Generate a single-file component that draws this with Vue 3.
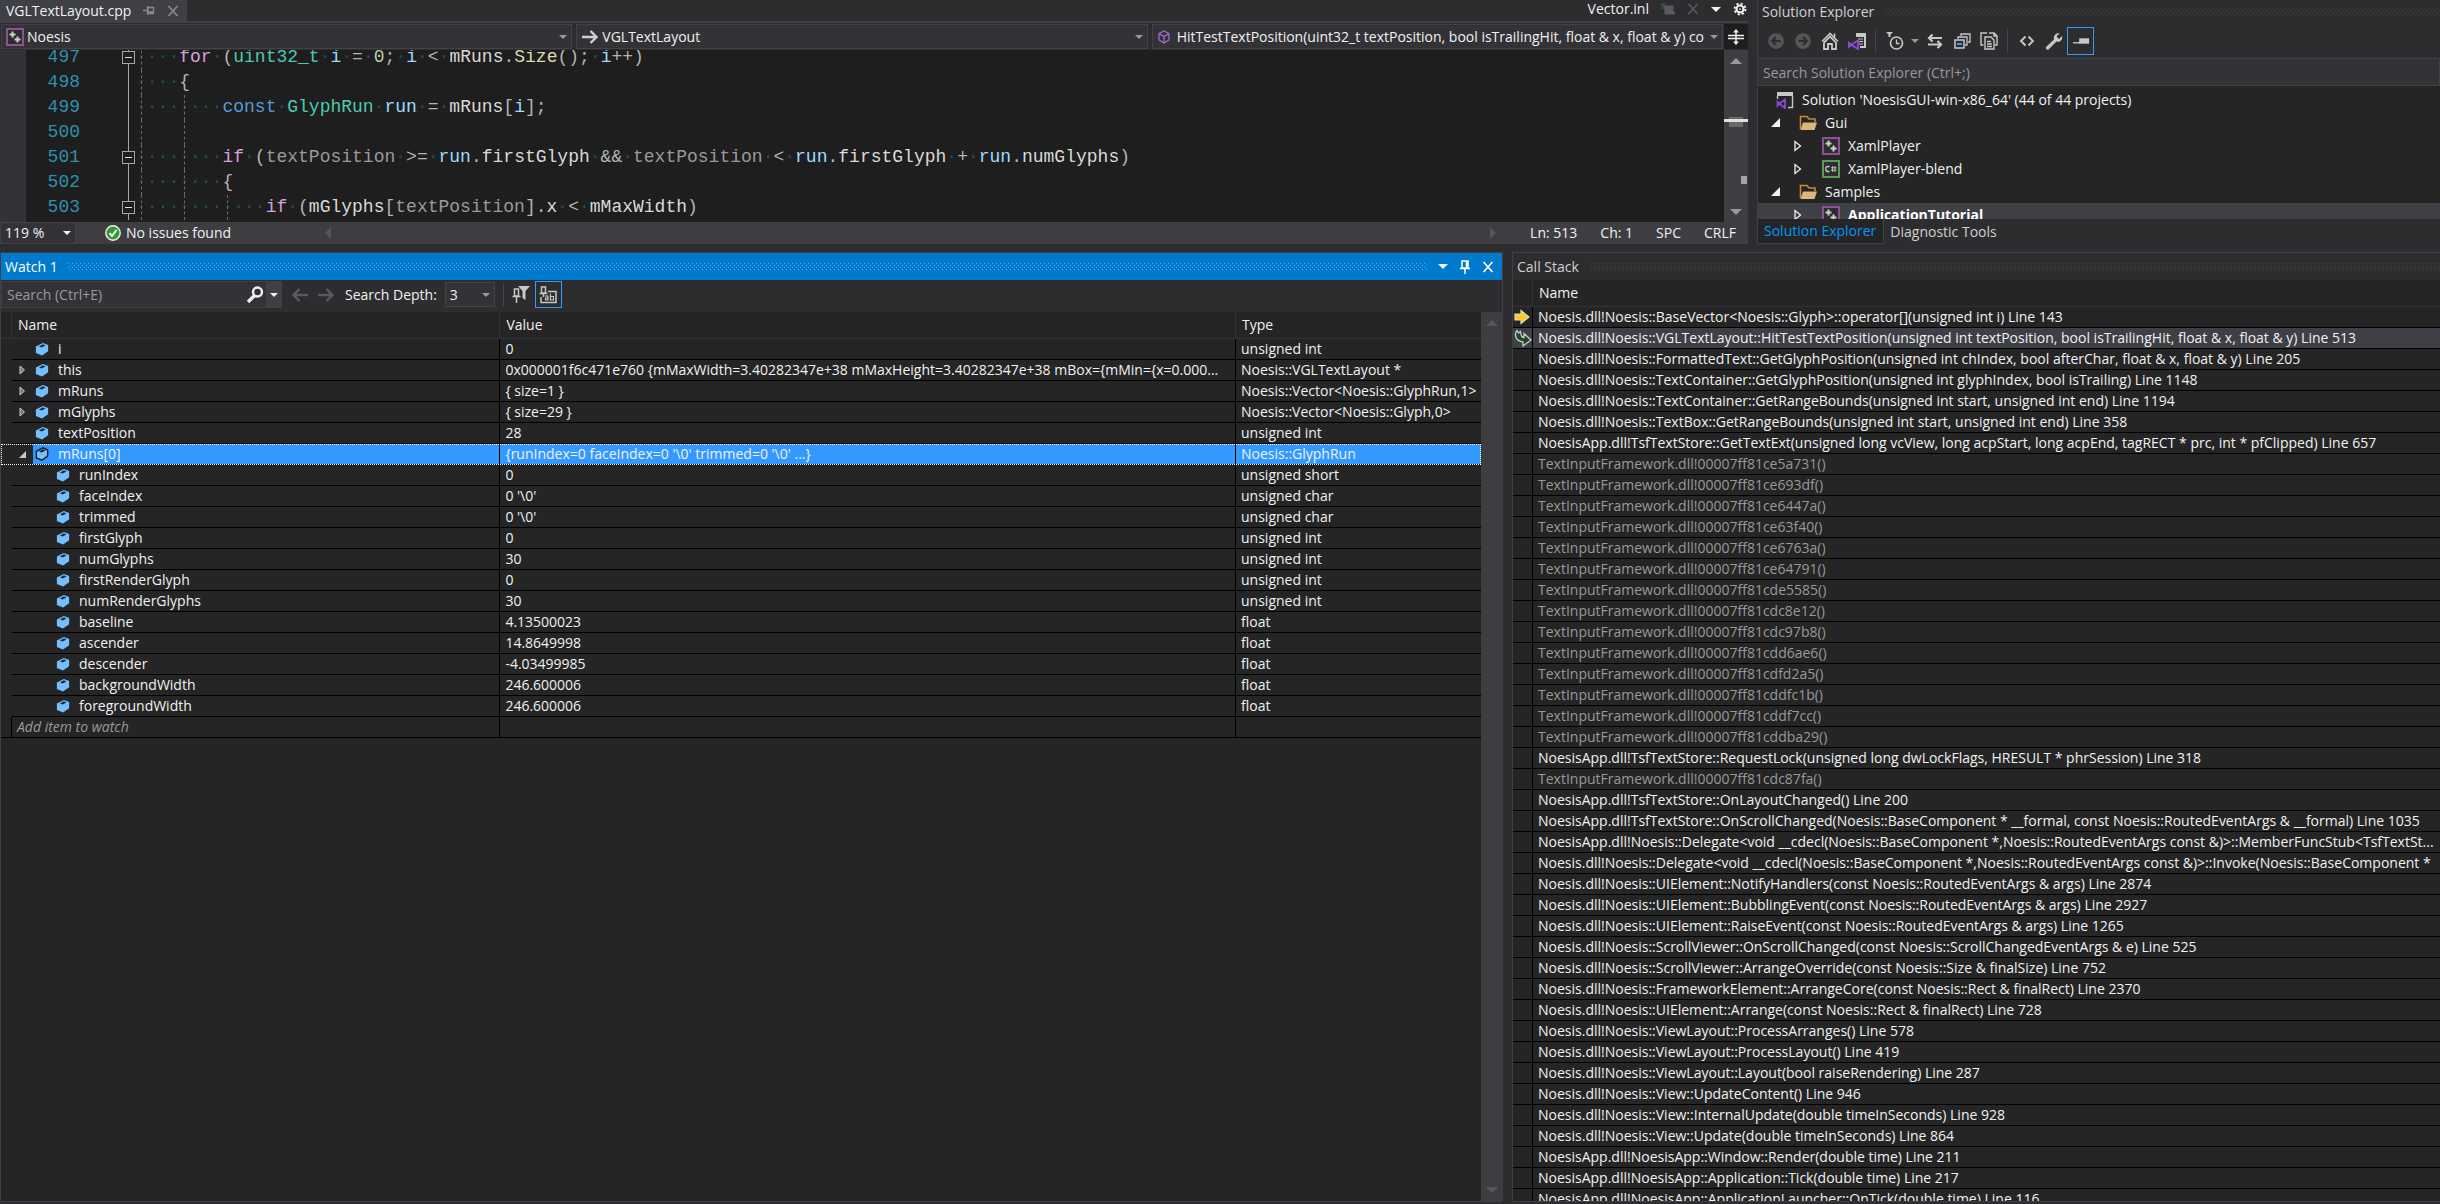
<template>
  <div class="ide">
    <svg class="sprite" aria-hidden="true">
      <symbol id="i-cube" viewBox="0 0 16 16">
        <path d="M1 5 L9 1 L15 3.5 V10.5 L8 15.5 L1 12.5z" fill="#75bfff" />
        <path d="M4.5 5 L9 2.6 L12 3.9 L7.6 6.4z" fill="#1b2c3a" />
      </symbol>
      <symbol id="i-cube-sel" viewBox="0 0 16 16">
        <path d="M1.5 5 L9 1 L14.5 3.5 V10.5 L8 15 L1.5 12.5z" fill="#75bfff" stroke="#14222e" stroke-width="1.6" />
        <path d="M4.5 5 L9 2.6 L12 3.9 L7.6 6.4z" fill="#14222e" />
      </symbol>
      <symbol id="i-cpp" viewBox="0 0 18 18">
        <rect x="1" y="1" width="16" height="16" fill="#2d2d30" stroke="#8d5292" stroke-width="2" />
        <path d="M6.5 3.5v6M3.5 6.5h6M11.5 8.5v6M8.5 11.5h6" stroke="#d0d0d0" stroke-width="2" />
      </symbol>
      <symbol id="i-cs" viewBox="0 0 18 18">
        <rect x="1" y="1" width="16" height="16" fill="#2d2d30" stroke="#5d9c5d" stroke-width="2" />
        <path d="M7.500 6.500H5L3.800 7.700v2.600L5 11.500h2.500" fill="none" stroke="#c8c8c8" stroke-width="1.300" />
        <path d="M10.500 6v6M13 6v6M9 7.800h5.500M9 10.200h5.500" fill="none" stroke="#b8b8b8" stroke-width="1" />
      </symbol>
      <symbol id="i-folder" viewBox="0 0 18 18">
        <path d="M1.500 15V2.500H8l2 2.500h6v3" fill="none" stroke="#c6893a" stroke-width="1.6" />
        <path d="M4 8.500h14l-2.500 7.500H1.500z" fill="#dcb67a" />
      </symbol>
      <symbol id="i-sln" viewBox="0 0 18 18">
        <path d="M1 1h16v4H1z" fill="#c8c8c8" />
        <path d="M1.500 5v3M16.500 5v11.500H12" fill="none" stroke="#c8c8c8" stroke-width="1.4" />
        <path d="M9 8.500v8.500L3.500 13 1.500 14.700V10.800L3.500 12.500z" fill="none" stroke="#8649d0" stroke-width="1.800" />
      </symbol>
      <symbol id="i-back" viewBox="0 0 16 16">
        <circle cx="8" cy="8" r="7" fill="#555558" />
        <path d="M12 8H5M8 4.500 4.500 8 8 11.500" fill="none" stroke="#2d2d30" stroke-width="1.800" />
      </symbol>
      <symbol id="i-fwd" viewBox="0 0 16 16">
        <circle cx="8" cy="8" r="7" fill="#555558" />
        <path d="M4 8h7M8 4.500 11.500 8 8 11.500" fill="none" stroke="#2d2d30" stroke-width="1.800" />
      </symbol>
      <symbol id="i-home" viewBox="0 0 18 18">
        <path d="M1 9.500 9 1.500l8 8M13.500 1.500v4" fill="none" stroke="#c8c8c8" stroke-width="1.600" />
        <path d="M3 10.500 9 4.500l6 6V17h-4v-5H7v5H3z" fill="none" stroke="#c8c8c8" stroke-width="1.800" />
      </symbol>
      <symbol id="i-views" viewBox="0 0 18 18">
        <path d="M8 1h10v15h-6v-2h4V5H8z" fill="#c8c8c8" />
        <path d="M10 7h5M10 9.500h5M11 12h4" stroke="#c8c8c8" stroke-width="1.200" />
        <path d="M10 8.500v8.500L3.500 13 1 14.700V10.800L3.500 12.500z" fill="none" stroke="#8649d0" stroke-width="1.900" />
      </symbol>
      <symbol id="i-pending" viewBox="0 0 18 18">
        <path d="M0 0h7L4.500 2.500V5H2.500V2.500z" fill="#c8c8c8" />
        <circle cx="10.500" cy="11" r="6" fill="none" stroke="#c8c8c8" stroke-width="1.600" />
        <path d="M10.500 7.500V11.500h3" fill="none" stroke="#c8c8c8" stroke-width="1.300" />
      </symbol>
      <symbol id="i-sync" viewBox="0 0 18 18">
        <path d="M3 6h13M6.500 2.500 3 6l3.500 3.500M2 12.500h13M11.500 9l3.500 3.500-3.500 3.500" fill="none" stroke="#c8c8c8" stroke-width="2.200" />
      </symbol>
      <symbol id="i-collapse" viewBox="0 0 18 18">
        <rect x="2" y="8" width="9" height="8" fill="none" stroke="#c8c8c8" stroke-width="1.500" />
        <path d="M5 7V5h9v8h-2M8 4V2h9v8h-2" fill="none" stroke="#c8c8c8" stroke-width="1.300" />
        <path d="M4 12h5" stroke="#3399ff" stroke-width="2" />
      </symbol>
      <symbol id="i-files" viewBox="0 0 18 18">
        <path d="M3.500 13H1V1h6M9 1h5l3 3v9h-2M14 1v3h3" fill="none" stroke="#c8c8c8" stroke-width="1.400" />
        <path d="M5 5h6l3 3v9H5zM7 9.500h4M7 12h5M7 14.500h5" fill="none" stroke="#c8c8c8" stroke-width="1.400" />
      </symbol>
      <symbol id="i-code" viewBox="0 0 16 16">
        <path d="M6.500 3.500 2 8l4.500 4.500M9.500 3.500 14 8l-4.500 4.500" fill="none" stroke="#c8c8c8" stroke-width="1.900" />
      </symbol>
      <symbol id="i-wrench" viewBox="0 0 18 18">
        <path d="M1 15 9 7.500C8 4 11 .5 14.500 1.500L11.500 4.500l2.500 2.500 3-3c1 4-2 6.500-5.500 5.500L3.500 17.500c-1.500 1-3.500-1-2.500-2.500z" fill="#c8c8c8" />
      </symbol>
      <symbol id="i-preview" viewBox="0 0 20 16">
        <path d="M1 10h8" stroke="#c8c8c8" stroke-width="1.500" />
        <path d="M8 5h11v6H8z" fill="#c8c8c8" />
      </symbol>
      <symbol id="i-gear" viewBox="0 0 16 16">
        <circle cx="8" cy="8" r="4" fill="none" stroke="#f1f1f1" stroke-width="2.400" />
        <circle cx="8" cy="8" r="6.200" fill="none" stroke="#f1f1f1" stroke-width="2.200" stroke-dasharray="2.430 2.430" />
        <circle cx="8" cy="8" r="1" fill="#f1f1f1" />
      </symbol>
      <symbol id="i-close" viewBox="0 0 12 12">
        <path d="M1.500 1 10.500 11M10.500 1 1.500 11" stroke="currentColor" stroke-width="1.700" />
      </symbol>
      <symbol id="i-pin" viewBox="0 0 12 14">
        <path d="M3 1h6v7H3zM7.500 1v7M1 8.500h10M6 9v5" fill="none" stroke="currentColor" stroke-width="1.500" />
      </symbol>
      <symbol id="i-pin-side" viewBox="0 0 12 12">
        <path d="M5 2.500h5.500v6H5zM5 7h5.500M4.500 1v9M4.500 5.500H0" fill="none" stroke="currentColor" stroke-width="1.300" />
      </symbol>
      <symbol id="i-keep" viewBox="0 0 14 12">
        <path d="M4 3h8v6h2v2H4zM0 1l4 3M3 0v4M0 5h4" fill="currentColor" stroke="currentColor" />
      </symbol>
      <symbol id="i-arrow" viewBox="0 0 18 16">
        <path d="M1 8h14M9.500 2 15.500 8l-6 6" fill="none" stroke="currentColor" stroke-width="2.400" />
      </symbol>
      <symbol id="i-method" viewBox="0 0 12 14">
        <path d="M6 1 11 3.500v6.500L6 13 1 10V3.500zM1 3.500 6 6.500 11 3.500M6 6.500V13" fill="none" stroke="#a56dd6" stroke-width="1.200" />
      </symbol>
      <symbol id="i-split" viewBox="0 0 16 16">
        <path d="M0 6.500h16M0 9.500h16M8 1v14" stroke="#f1f1f1" stroke-width="1.500" />
        <path d="M8 0 11 3.500H5zM8 16l3-3.500H5z" fill="#f1f1f1" />
      </symbol>
      <symbol id="i-check" viewBox="0 0 16 16">
        <circle cx="8" cy="8" r="7.200" fill="#339933" stroke="#f1f1f1" stroke-width="1.400" />
        <path d="M4.500 8.200 7 11l4.500-6" fill="none" stroke="#fff" stroke-width="1.900" />
      </symbol>
      <symbol id="i-search" viewBox="0 0 18 18">
        <circle cx="11.500" cy="6" r="4.500" fill="none" stroke="#f1f1f1" stroke-width="2.400" />
        <path d="M8.500 9.500 2 16" stroke="#f1f1f1" stroke-width="3.400" />
      </symbol>
      <symbol id="i-pinfilter" viewBox="0 0 18 18">
        <path d="M2.500 3h4v7h-4zM0.500 10.500h8M4.500 11v6" fill="none" stroke="#c8c8c8" stroke-width="1.500" />
        <path d="M6 0h12l-4.500 5v9L10.500 12V5z" fill="#c8c8c8" />
      </symbol>
      <symbol id="i-pinab" viewBox="0 0 18 18">
        <path d="M2.500 1h4v6h-4zM0.500 7.500h8M4.500 8v3M9 5.500h8v11H2V11" fill="none" stroke="#c8c8c8" stroke-width="1.500" />
        <path d="M6 10h3v4H6.500v-2H9M11.500 7.500V14H14.500v-3.500h-3" fill="none" stroke="#c8c8c8" stroke-width="1.200" />
      </symbol>
      <symbol id="i-current" viewBox="0 0 16 16">
        <path d="M1 5h6V1.500L15 8l-8 6.500V11H1z" fill="#ffcc22" stroke="#d8d8d8" stroke-width="1.200" />
      </symbol>
      <symbol id="i-caller" viewBox="0 0 18 18">
        <path d="M3 1.500C.5 4.500.5 12 9 13v4l8-6-7-6.500V8.500C6.500 8.500 7 5 6.500 2.500L4.500 4z" fill="#1f4a2a" stroke="#c8c8c8" stroke-width="1.300" />
      </symbol>
    </svg>

    <div class="top-row">
      <section class="editor">
        <div class="tab-strip">
          <div class="file-tab">
            <span>VGLTextLayout.cpp</span>
            <button class="plain dim" aria-label="Pin tab"><svg class="s12"><use href="#i-pin-side" /></svg></button>
            <button class="plain dim" aria-label="Close tab"><svg class="s12"><use href="#i-close" /></svg></button>
          </div>
          <div class="preview-tab">
            <span>Vector.inl</span>
            <button class="plain faint" aria-label="Keep open"><svg class="s14"><use href="#i-keep" /></svg></button>
            <button class="plain faint" aria-label="Close preview"><svg class="s12"><use href="#i-close" /></svg></button>
            <button class="plain" aria-label="Open files"><i class="caret big"></i></button>
            <button class="plain" aria-label="Options"><svg class="s14"><use href="#i-gear" /></svg></button>
          </div>
        </div>

        <div class="nav-bar">
          <div class="combo">
            <svg class="s18"><use href="#i-cpp" /></svg>
            <select aria-label="Project"><option>Noesis</option></select>
            <i class="caret"></i>
          </div>
          <div class="combo">
            <svg class="s18 light"><use href="#i-arrow" /></svg>
            <select aria-label="Scope"><option>VGLTextLayout</option></select>
            <i class="caret"></i>
          </div>
          <div class="combo member">
            <svg class="s14"><use href="#i-method" /></svg>
            <select aria-label="Member"><option>HitTestTextPosition(uint32_t textPosition, bool isTrailingHit, float &amp; x, float &amp; y) const</option></select>
            <i class="caret"></i>
          </div>
          <button class="split" aria-label="Split"><svg class="s16"><use href="#i-split" /></svg></button>
        </div>

        <div class="code-area">
          <div class="code">
            <div v-for="line in codeLines" :key="line.no" class="code-line">
              <span class="glyph-margin"></span>
              <span class="line-no">{{ line.no }}</span>
              <span class="fold"><b v-if="line.fold"></b></span>
              <code class="src"><i v-for="g in line.guides" :key="g" class="guide" :class="'g' + g"></i><span
                v-for="(t, i) in line.tokens" :key="i" :class="t[1]">{{ t[0] }}</span></code>
            </div>
          </div>
          <div class="map">
            <i class="tri up"></i>
            <i class="mark view"></i>
            <i class="mark caret-line"></i>
            <i class="mark change"></i>
            <i class="tri down"></i>
          </div>
        </div>

        <div class="status">
          <div class="combo zoom">
            <select aria-label="Zoom"><option>119 %</option></select>
            <i class="caret white"></i>
          </div>
          <span class="issues"><svg class="s16"><use href="#i-check" /></svg>No issues found</span>
          <i class="tri left"></i>
          <span class="grow"></span>
          <i class="tri right"></i>
          <span class="pos">Ln: 513</span>
          <span class="pos">Ch: 1</span>
          <span class="pos">SPC</span>
          <span class="pos">CRLF</span>
        </div>
      </section>

      <section class="solution">
        <div class="panel-title"><span>Solution Explorer</span><i class="grip"></i></div>
        <div class="sln-tools">
          <template v-for="tool in slnTools" :key="tool.label">
            <span v-if="tool.sep" class="sep"></span>
            <button class="tool" :class="{ on: tool.on }" :aria-label="tool.label">
              <svg :class="tool.size || 's18'"><use :href="'#i-' + tool.icon" /></svg>
            </button>
            <button v-if="tool.menu" class="plain tool-menu" aria-label="Filter menu"><i class="caret"></i></button>
          </template>
        </div>
        <input class="sln-search" type="text" placeholder="Search Solution Explorer (Ctrl+;)" aria-label="Search Solution Explorer" />
        <div class="tree">
          <div v-for="node in tree" :key="node.name" class="node" :class="['lvl' + node.level, { selected: node.selected }]">
            <span v-if="node.level" class="slot">
              <svg v-if="node.open" width="9" height="9"><path d="M9 0v9H0z" fill="#f1f1f1" /></svg>
              <svg v-else width="8" height="12"><path d="M1 1.500v9L6.500 6z" fill="none" stroke="#f1f1f1" stroke-width="1.300" /></svg>
            </span>
            <svg class="s18"><use :href="'#i-' + node.icon" /></svg>
            <span class="label">{{ node.name }}</span>
          </div>
        </div>
        <div class="dock-tabs">
          <button class="dock-tab active">Solution Explorer</button>
          <button class="dock-tab">Diagnostic Tools</button>
        </div>
      </section>
    </div>

    <div class="bottom-row">
      <section class="watch">
        <div class="panel-title blue">
          <span>Watch 1</span><i class="grip"></i>
          <button class="plain" aria-label="Window position"><i class="caret big"></i></button>
          <button class="plain" aria-label="Auto hide"><svg class="s14"><use href="#i-pin" /></svg></button>
          <button class="plain" aria-label="Close"><svg class="s12"><use href="#i-close" /></svg></button>
        </div>
        <div class="watch-tools">
          <div class="search-box">
            <input type="text" placeholder="Search (Ctrl+E)" aria-label="Search watch" />
            <button class="plain" aria-label="Find"><svg class="s18"><use href="#i-search" /></svg></button>
            <button class="plain drop" aria-label="Search options"><i class="caret white"></i></button>
          </div>
          <button class="plain prev faint" aria-label="Previous"><svg class="s18"><use href="#i-arrow" /></svg></button>
          <button class="plain faint" aria-label="Next"><svg class="s18"><use href="#i-arrow" /></svg></button>
          <label for="depth">Search Depth:</label>
          <div class="combo depth">
            <select id="depth"><option>3</option></select>
            <i class="caret"></i>
          </div>
          <span class="sep"></span>
          <button class="tool" aria-label="Pinned filter"><svg class="s18"><use href="#i-pinfilter" /></svg></button>
          <button class="tool on" aria-label="Pinned names"><svg class="s18"><use href="#i-pinab" /></svg></button>
        </div>
        <div class="watch-body">
          <table class="grid">
            <colgroup><col class="c-margin" /><col class="c-name" /><col /><col class="c-type" /></colgroup>
            <thead>
              <tr><th></th><th>Name</th><th>Value</th><th>Type</th></tr>
            </thead>
            <tbody>
              <tr v-for="row in watches" :key="row.name" :class="{ selected: row.selected }">
                <td class="margin"></td>
                <td class="name">
                  <div class="cell">
                    <span class="exp" :class="{ child: row.child }">
                      <svg v-if="row.expand === 'closed'" width="7" height="10"><path d="M1 1v8L5.500 5z" fill="#777" stroke="#c8c8c8" /></svg>
                      <svg v-if="row.expand === 'open'" width="7" height="7"><path d="M7 0v7H0z" fill="#c8c8c8" /></svg>
                    </span>
                    <span class="label"><svg class="s14"><use :href="row.selected ? '#i-cube-sel' : '#i-cube'" /></svg>{{ row.name }}</span>
                  </div>
                </td>
                <td>{{ row.value }}</td>
                <td>{{ row.type }}</td>
              </tr>
              <tr class="add">
                <td class="margin"></td>
                <td>Add item to watch</td>
                <td></td>
                <td></td>
              </tr>
            </tbody>
          </table>
          <div class="vscroll"><i class="tri up off"></i><i class="tri down off"></i></div>
        </div>
      </section>

      <section class="stack">
        <div class="panel-title"><span>Call Stack</span><i class="grip"></i></div>
        <table class="grid">
          <colgroup><col class="c-gutter" /><col /></colgroup>
          <thead>
            <tr><th></th><th>Name</th></tr>
          </thead>
          <tbody>
            <tr v-for="(frame, i) in frames" :key="i" :class="{ external: frame.startsWith('TextInput'), current: i === 1 }">
              <td class="icon-cell">
                <svg v-if="i === 0" class="s16"><use href="#i-current" /></svg>
                <svg v-if="i === 1" class="s18"><use href="#i-caller" /></svg>
              </td>
              <td>{{ frame }}</td>
            </tr>
          </tbody>
        </table>
      </section>
    </div>
  </div>
</template>

<script setup>
import { ref } from 'vue'

// every space in the source is drawn as a dot
const line = (no, fold, guides, indent, parts) => {
  const tokens = [['·'.repeat(indent), 'ws']]
  parts.forEach(([text, cls]) => {
    text.split(/( )/).filter(Boolean).forEach((t) => {
      tokens.push(t === ' ' ? ['·', 'ws'] : [t, cls])
    })
  })
  return { no, fold, guides, tokens }
}

const codeLines = [
  line(497, true, [0], 4, [['for', 'ctl'], [' (', 'op'], ['uint32_t', 'type'], [' i', 'var'], [' = ', 'op'], ['0', 'num'], ['; ', 'op'], ['i', 'var'], [' < ', 'op'], ['mRuns', 'mem'], ['.', 'op'], ['Size', 'fn'], ['(); ', 'op'], ['i', 'var'], ['++)', 'op']]),
  line(498, false, [0], 4, [['{', 'op']]),
  line(499, false, [0, 4], 8, [['const', 'kw'], [' GlyphRun', 'type'], [' run', 'var'], [' = ', 'op'], ['mRuns', 'mem'], ['[', 'op'], ['i', 'var'], ['];', 'op']]),
  line(500, false, [0, 4], 0, []),
  line(501, true, [0, 4], 8, [['if', 'ctl'], [' (', 'op'], ['textPosition', 'par'], [' >= ', 'op'], ['run', 'var'], ['.', 'op'], ['firstGlyph', 'mem'], [' && ', 'op'], ['textPosition', 'par'], [' < ', 'op'], ['run', 'var'], ['.', 'op'], ['firstGlyph', 'mem'], [' + ', 'op'], ['run', 'var'], ['.', 'op'], ['numGlyphs', 'mem'], [')', 'op']]),
  line(502, false, [0, 4], 8, [['{', 'op']]),
  line(503, true, [0, 4, 8], 12, [['if', 'ctl'], [' (', 'op'], ['mGlyphs', 'mem'], ['[', 'op'], ['textPosition', 'par'], ['].', 'op'], ['x', 'mem'], [' < ', 'op'], ['mMaxWidth', 'mem'], [')', 'op']])
]

const slnTools = [
  { icon: 'back', label: 'Back' },
  { icon: 'fwd', label: 'Forward' },
  { icon: 'home', label: 'Home' },
  { icon: 'views', label: 'Switch Views' },
  { icon: 'pending', label: 'Pending Changes Filter', sep: true, menu: true },
  { icon: 'sync', label: 'Sync' },
  { icon: 'collapse', label: 'Collapse All' },
  { icon: 'files', label: 'Show All Files' },
  { icon: 'code', label: 'View Code', sep: true, size: 's16' },
  { icon: 'wrench', label: 'Properties' },
  { icon: 'preview', label: 'Preview Selected Items', on: true }
]

const tree = ref([
  { name: "Solution 'NoesisGUI-win-x86_64' (44 of 44 projects)", level: 0, icon: 'sln' },
  { name: 'Gui', level: 1, icon: 'folder', open: true },
  { name: 'XamlPlayer', level: 2, icon: 'cpp' },
  { name: 'XamlPlayer-blend', level: 2, icon: 'cs' },
  { name: 'Samples', level: 1, icon: 'folder', open: true },
  { name: 'ApplicationTutorial', level: 2, icon: 'cpp', selected: true }
])

const watches = ref([
  { name: 'i', value: '0', type: 'unsigned int' },
  { name: 'this', value: '0x000001f6c471e760 {mMaxWidth=3.40282347e+38 mMaxHeight=3.40282347e+38 mBox={mMin={x=0.000...', type: 'Noesis::VGLTextLayout *', expand: 'closed' },
  { name: 'mRuns', value: '{ size=1 }', type: 'Noesis::Vector<Noesis::GlyphRun,1>', expand: 'closed' },
  { name: 'mGlyphs', value: '{ size=29 }', type: 'Noesis::Vector<Noesis::Glyph,0>', expand: 'closed' },
  { name: 'textPosition', value: '28', type: 'unsigned int' },
  { name: 'mRuns[0]', value: "{runIndex=0 faceIndex=0 '\\0' trimmed=0 '\\0' ...}", type: 'Noesis::GlyphRun', expand: 'open', selected: true },
  { name: 'runIndex', value: '0', type: 'unsigned short', child: true },
  { name: 'faceIndex', value: "0 '\\0'", type: 'unsigned char', child: true },
  { name: 'trimmed', value: "0 '\\0'", type: 'unsigned char', child: true },
  { name: 'firstGlyph', value: '0', type: 'unsigned int', child: true },
  { name: 'numGlyphs', value: '30', type: 'unsigned int', child: true },
  { name: 'firstRenderGlyph', value: '0', type: 'unsigned int', child: true },
  { name: 'numRenderGlyphs', value: '30', type: 'unsigned int', child: true },
  { name: 'baseline', value: '4.13500023', type: 'float', child: true },
  { name: 'ascender', value: '14.8649998', type: 'float', child: true },
  { name: 'descender', value: '-4.03499985', type: 'float', child: true },
  { name: 'backgroundWidth', value: '246.600006', type: 'float', child: true },
  { name: 'foregroundWidth', value: '246.600006', type: 'float', child: true }
])

const frames = ref([
  'Noesis.dll!Noesis::BaseVector<Noesis::Glyph>::operator[](unsigned int i) Line 143',
  'Noesis.dll!Noesis::VGLTextLayout::HitTestTextPosition(unsigned int textPosition, bool isTrailingHit, float & x, float & y) Line 513',
  'Noesis.dll!Noesis::FormattedText::GetGlyphPosition(unsigned int chIndex, bool afterChar, float & x, float & y) Line 205',
  'Noesis.dll!Noesis::TextContainer::GetGlyphPosition(unsigned int glyphIndex, bool isTrailing) Line 1148',
  'Noesis.dll!Noesis::TextContainer::GetRangeBounds(unsigned int start, unsigned int end) Line 1194',
  'Noesis.dll!Noesis::TextBox::GetRangeBounds(unsigned int start, unsigned int end) Line 358',
  'NoesisApp.dll!TsfTextStore::GetTextExt(unsigned long vcView, long acpStart, long acpEnd, tagRECT * prc, int * pfClipped) Line 657',
  'TextInputFramework.dll!00007ff81ce5a731()',
  'TextInputFramework.dll!00007ff81ce693df()',
  'TextInputFramework.dll!00007ff81ce6447a()',
  'TextInputFramework.dll!00007ff81ce63f40()',
  'TextInputFramework.dll!00007ff81ce6763a()',
  'TextInputFramework.dll!00007ff81ce64791()',
  'TextInputFramework.dll!00007ff81cde5585()',
  'TextInputFramework.dll!00007ff81cdc8e12()',
  'TextInputFramework.dll!00007ff81cdc97b8()',
  'TextInputFramework.dll!00007ff81cdd6ae6()',
  'TextInputFramework.dll!00007ff81cdfd2a5()',
  'TextInputFramework.dll!00007ff81cddfc1b()',
  'TextInputFramework.dll!00007ff81cddf7cc()',
  'TextInputFramework.dll!00007ff81cddba29()',
  'NoesisApp.dll!TsfTextStore::RequestLock(unsigned long dwLockFlags, HRESULT * phrSession) Line 318',
  'TextInputFramework.dll!00007ff81cdc87fa()',
  'NoesisApp.dll!TsfTextStore::OnLayoutChanged() Line 200',
  'NoesisApp.dll!TsfTextStore::OnScrollChanged(Noesis::BaseComponent * __formal, const Noesis::RoutedEventArgs & __formal) Line 1035',
  'NoesisApp.dll!Noesis::Delegate<void __cdecl(Noesis::BaseComponent *,Noesis::RoutedEventArgs const &)>::MemberFuncStub<TsfTextSt...',
  'Noesis.dll!Noesis::Delegate<void __cdecl(Noesis::BaseComponent *,Noesis::RoutedEventArgs const &)>::Invoke(Noesis::BaseComponent *',
  'Noesis.dll!Noesis::UIElement::NotifyHandlers(const Noesis::RoutedEventArgs & args) Line 2874',
  'Noesis.dll!Noesis::UIElement::BubblingEvent(const Noesis::RoutedEventArgs & args) Line 2927',
  'Noesis.dll!Noesis::UIElement::RaiseEvent(const Noesis::RoutedEventArgs & args) Line 1265',
  'Noesis.dll!Noesis::ScrollViewer::OnScrollChanged(const Noesis::ScrollChangedEventArgs & e) Line 525',
  'Noesis.dll!Noesis::ScrollViewer::ArrangeOverride(const Noesis::Size & finalSize) Line 752',
  'Noesis.dll!Noesis::FrameworkElement::ArrangeCore(const Noesis::Rect & finalRect) Line 2370',
  'Noesis.dll!Noesis::UIElement::Arrange(const Noesis::Rect & finalRect) Line 728',
  'Noesis.dll!Noesis::ViewLayout::ProcessArranges() Line 578',
  'Noesis.dll!Noesis::ViewLayout::ProcessLayout() Line 419',
  'Noesis.dll!Noesis::ViewLayout::Layout(bool raiseRendering) Line 287',
  'Noesis.dll!Noesis::View::UpdateContent() Line 946',
  'Noesis.dll!Noesis::View::InternalUpdate(double timeInSeconds) Line 928',
  'Noesis.dll!Noesis::View::Update(double timeInSeconds) Line 864',
  'NoesisApp.dll!NoesisApp::Window::Render(double time) Line 211',
  'NoesisApp.dll!NoesisApp::Application::Tick(double time) Line 217',
  'NoesisApp.dll!NoesisApp::ApplicationLauncher::OnTick(double time) Line 116'
])
</script>

<style>
body {
  background: #2d2d30;
}
</style>

<style scoped>
.ide {
  display: flex;
  flex-direction: column;
  gap: 8px;
  height: 100vh;
  overflow: hidden;
  background: #2d2d30;
  color: #f1f1f1;
  font-family: "Open Sans", "Noto Sans", sans-serif;
  font-size: 14px;
  line-height: 20px;
}

.ide *,
.ide *::before {
  box-sizing: border-box;
}

.sprite {
  position: absolute;
  width: 0;
  height: 0;
}

svg {
  display: block;
  flex: none;
}

.s12 { width: 12px; height: 12px; }
.s14 { width: 14px; height: 14px; }
.s16 { width: 16px; height: 16px; }
.s18 { width: 18px; height: 18px; }

button,
input,
select {
  font: inherit;
  color: inherit;
  margin: 0;
  padding: 0;
  border: 0;
  border-radius: 0;
  outline: none;
  background: none;
}

input::placeholder {
  color: #999;
  opacity: 1;
}

.plain {
  display: flex;
  align-items: center;
  justify-content: center;
}

.dim { color: #8a8a8e; }
.faint { color: #5a5a5e; }
.light { color: #d0d0d0; }
.grow { flex: 1; }

.caret {
  flex: none;
  width: 0;
  height: 0;
  border: 4px solid transparent;
  border-top-color: #999;
  border-bottom: 0;
}

.caret.white { border-top-color: #f1f1f1; }

.caret.big {
  border-width: 5px;
  border-top-color: #f1f1f1;
  border-bottom: 0;
}

.tri {
  width: 0;
  height: 0;
  border: 6px solid transparent;
}

.tri.up { border-bottom-color: #999; border-top: 0; }
.tri.down { border-top-color: #999; border-bottom: 0; }
.tri.left { border-right-color: #555558; border-left: 0; }
.tri.right { border-left-color: #555558; border-right: 0; }
.tri.up.off { border-bottom-color: #555558; }
.tri.down.off { border-top-color: #555558; }

.top-row {
  display: grid;
  grid-template-columns: minmax(0, 1748fr) minmax(0, 683fr);
  gap: 9px;
  flex: none;
}

.bottom-row {
  display: grid;
  grid-template-columns: minmax(0, 1503fr) minmax(0, 928fr);
  gap: 9px;
  flex: 1;
  min-height: 0;
  padding-bottom: 2px;
}

section {
  display: flex;
  flex-direction: column;
  min-width: 0;
  min-height: 0;
  overflow: hidden;
}

/* editor */
.tab-strip {
  display: flex;
  justify-content: space-between;
  height: 23px;
  border-bottom: 2px solid #3f3f46;
}

.file-tab {
  display: flex;
  align-items: center;
  gap: 12px;
  padding: 0 8px 0 6px;
  background: #3f3f46;
}

.preview-tab {
  display: flex;
  align-items: center;
  gap: 12px;
  padding-right: 1px;
  height: 18px;
}

.nav-bar {
  display: flex;
  gap: 4px;
  height: 27px;
  padding: 1px 0 1px 1px;
  background: #2d2d30;
}

.combo {
  display: flex;
  align-items: center;
  gap: 3px;
  flex: 1 1 0;
  min-width: 0;
  padding: 0 4px;
  background: #333337;
  border: 1px solid #434346;
}

.combo select {
  flex: 1;
  min-width: 0;
  height: 20px;
  appearance: none;
  overflow: hidden;
  white-space: nowrap;
}

.combo.member {
  gap: 6px;
}

.split {
  display: flex;
  align-items: center;
  justify-content: center;
  width: 24px;
  margin-left: -3px;
  background: #1e1e1e;
}

.code-area {
  display: flex;
  height: 172px;
  background: #1e1e1e;
}

.code {
  display: flex;
  flex-direction: column;
  justify-content: flex-end;
  flex: 1;
  min-width: 0;
  overflow: hidden;
  padding-bottom: 2px;
  background: linear-gradient(#333337, #333337) 0 0 / 26px 100% no-repeat;
}

.code-line {
  display: flex;
  flex: none;
  height: 25px;
  font-family: "Liberation Mono", monospace;
  font-size: 18px;
  line-height: 25px;
}

.glyph-margin {
  width: 26px;
}

.line-no {
  width: 54px;
  text-align: right;
  color: #2b91af;
}

.fold {
  display: flex;
  align-items: center;
  justify-content: center;
  width: 14px;
  margin: 0 1px 0 41px;
  background: linear-gradient(#a5a5a5, #a5a5a5) 7px 0 / 1px 100% no-repeat;
}

.fold b {
  width: 13px;
  height: 13px;
  border: 1px solid #a5a5a5;
  background: linear-gradient(#e0e0e0, #e0e0e0) center / 7px 1px no-repeat #1e1e1e;
}

.src {
  position: relative;
  font: inherit;
  white-space: pre;
}

.guide {
  position: absolute;
  top: 0;
  bottom: 0;
  border-left: 1px dashed #6a6a6a;
}

.g0 { left: 5px; }
.g4 { left: 48px; }
.g8 { left: 91px; }

.ws { color: #1c5058; }
.ctl { color: #d8a0df; }
.kw { color: #569cd6; }
.type { color: #4ec9b0; }
.var { color: #9cdcfe; }
.fn { color: #dcdcaa; }
.num { color: #b5cea8; }
.op { color: #b4b4b4; }
.mem { color: #dadada; }
.par { color: #9a9a9a; }

.map {
  position: relative;
  display: flex;
  flex-direction: column;
  align-items: center;
  justify-content: space-between;
  width: 24px;
  padding: 8px 0 7px;
  background: #3e3e42;
}

.mark {
  position: absolute;
}

.view {
  top: 67px;
  left: 5px;
  right: 5px;
  height: 10px;
  background: #686868;
}

.caret-line {
  top: 69px;
  left: 0;
  right: 0;
  height: 3px;
  background: #e0e0e0;
}

.change {
  top: 126px;
  right: 1px;
  width: 6px;
  height: 8px;
  background: #a5a5a5;
}

.status {
  display: flex;
  align-items: center;
  height: 22px;
  padding: 1px 12px 1px 0;
  background: #3e3e42;
}

.zoom {
  flex: none;
  width: 76px;
}

.issues {
  display: flex;
  align-items: center;
  gap: 5px;
  margin: 0 94px 0 29px;
}

.pos {
  margin-left: 23px;
}

.tri.right + .pos {
  margin-left: 34px;
}

/* panels */
.panel-title {
  display: flex;
  align-items: center;
  gap: 10px;
  flex: none;
  height: 27px;
  padding-left: 4px;
  color: #d0d0d0;
}

.grip {
  flex: 1;
  height: 7px;
  color: #46464a;
  background:
    conic-gradient(from 270deg at 1px 1px, currentColor 90deg, transparent 0) 0 0 / 4px 4px,
    conic-gradient(from 270deg at 1px 1px, currentColor 90deg, transparent 0) 2px 2px / 4px 4px;
}

.panel-title.blue {
  padding-right: 8px;
  background: #007acc;
  color: #fff;
}

.blue .grip {
  color: #59a8de;
}

.tool {
  display: flex;
  align-items: center;
  justify-content: center;
  width: 27px;
  height: 28px;
  border: 1px solid transparent;
}

.tool.on {
  border-color: #3399ff;
}

.sep {
  width: 1px;
  height: 23px;
  margin: 0 5px;
  background: #46464a;
}

/* solution explorer */
.solution {
  border-left: 1px solid #3f3f46;
}

.solution .panel-title {
  height: 23px;
}

.sln-tools {
  display: flex;
  align-items: center;
  height: 35px;
  padding-left: 4px;
}

.tool-menu {
  width: 13px;
}

.sln-search {
  flex: none;
  height: 28px;
  padding: 0 6px 0 5px;
  background: #333337;
  border: 1px solid #3f3f46;
  border-left: 0;
}

.tree {
  height: 133px;
  padding-top: 2px;
  overflow: hidden;
  background: #252526;
}

.node {
  display: flex;
  align-items: center;
  height: 23px;
}

.lvl0 { padding-left: 18px; }
.lvl1 { padding-left: 9px; }
.lvl2 { padding-left: 32px; }

.slot {
  width: 32px;
  padding-left: 4px;
}

.node .label {
  margin-left: 8px;
}

.node.selected {
  background: #3f3f46;
  color: #fff;
  font-weight: 700;
}

.dock-tabs {
  display: flex;
  height: 25px;
}

.dock-tab {
  padding: 0 7px 0 6px;
  color: #d0d0d0;
}

.dock-tab.active {
  background: #252526;
  border: 1px solid #3f3f46;
  border-width: 0 1px 1px 0;
  color: #0097fb;
}

/* watch */
.watch {
  border: 1px solid #3f3f46;
}

.watch-tools {
  display: flex;
  align-items: center;
  flex: none;
  height: 32px;
  padding-bottom: 3px;
}

.search-box {
  display: flex;
  width: 281px;
  height: 27px;
  background: #333337;
  border: 1px solid #3f3f46;
}

.search-box input {
  flex: 1;
  min-width: 0;
  padding-left: 5px;
}

.search-box .drop {
  width: 15px;
  margin-left: 2px;
  background: #3f3f46;
}

.prev {
  margin: 0 8px 0 9px;
}

.prev svg {
  transform: scaleX(-1);
}

.watch-tools label {
  margin: 0 8px 0 10px;
}

.depth {
  flex: none;
  width: 50px;
  height: 25px;
}

.watch-tools .sep {
  margin: 0 4px 0 8px;
}

.watch-tools .tool {
  height: 27px;
}

.watch-body {
  display: flex;
  flex: 1;
  min-height: 0;
  background: #252526;
}

.vscroll {
  display: flex;
  flex-direction: column;
  align-items: center;
  justify-content: space-between;
  width: 21px;
  padding: 8px 0;
  background: #3e3e42;
}

.grid {
  flex: 1;
  align-self: flex-start;
  width: 100%;
  table-layout: fixed;
  border-collapse: separate;
  border-spacing: 0;
}

.c-margin { width: 11px; }
.c-name { width: 33%; }
.c-type { width: 245px; }
.c-gutter { width: 20px; }

.grid th {
  height: 27px;
  padding: 0 6px;
  font-weight: 400;
  text-align: left;
  background: #252526;
  border-right: 1px solid #333337;
  border-bottom: 1px solid #333337;
}

.grid td {
  height: 21px;
  padding: 0 5px;
  overflow: hidden;
  white-space: nowrap;
  border-right: 1px solid #000;
  border-bottom: 1px solid #000;
}

.grid tr > :last-child {
  border-right: 0;
}

.grid td.margin {
  padding: 0;
  border: 0;
}

.grid td.name {
  padding: 0;
}

.cell {
  display: flex;
  align-items: center;
}

.exp {
  flex: none;
  width: 21px;
  padding-left: 7px;
}

.exp.child {
  width: 42px;
}

.cell .label {
  display: flex;
  align-items: center;
  flex: 1;
  gap: 9px;
  padding-left: 2px;
}

.watch tr.selected {
  outline: 1px dotted #fff;
  outline-offset: -1px;
}

.selected td:nth-child(n + 3),
.selected .cell .label {
  background: #3399ff;
}

.add td {
  color: #999;
  font-style: italic;
}

.grid .add td.margin {
  border-right: 1px solid #000;
  border-bottom: 1px solid #000;
}

/* call stack */
.stack {
  border: 1px solid #3f3f46;
  border-right: 0;
  background: #252526;
}

.stack .panel-title {
  background: #2d2d30;
}

.stack .grid {
  flex: none;
}

.grid .icon-cell {
  padding: 0 1px;
}

.external {
  color: #999;
}

.current {
  background: #3f3f46;
}
</style>
